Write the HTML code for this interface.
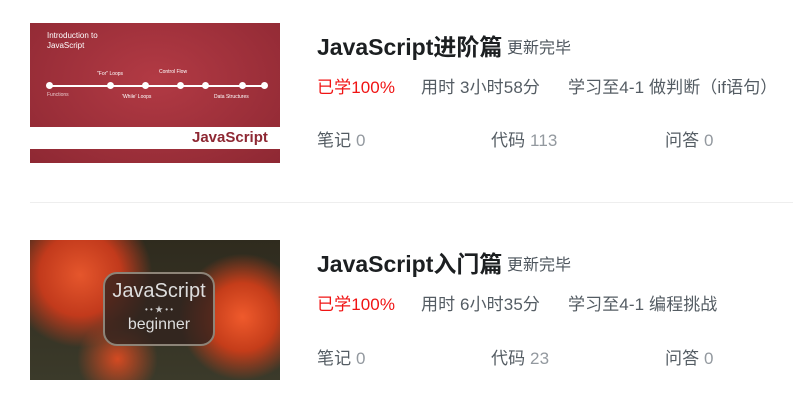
<!DOCTYPE html><html><head><meta charset="utf-8"><style>
*{margin:0;padding:0;box-sizing:border-box}
body{width:793px;height:418px;background:#fff;font-family:"Liberation Sans","Noto Sans CJK SC",sans-serif;position:relative;overflow:hidden}
.a{position:absolute;white-space:nowrap}
.t{font-size:23px;font-weight:bold;color:#1c1f21}
.s{font-size:16px;color:#4d555d}
.l{font-size:17px;color:#545c63;letter-spacing:.1px}
.r{color:#f01414}
.g{color:#93999f}
</style></head><body>
<div class="a" style="left:30px;top:23px;width:250px;height:140px;background:radial-gradient(ellipse at 50% 40%,#b23a44,#8e2833);overflow:hidden">
<div class="a" style="left:17px;top:8px;color:#fff;font-size:8px;line-height:10px">Introduction to<br>JavaScript</div>
<div class="a" style="left:18px;top:62px;width:215px;height:2px;background:#fff"></div>
<div class="a" style="left:16px;top:59px;width:7px;height:7px;border-radius:50%;background:#fff;box-shadow:61px 0 #fff,96px 0 #fff,131px 0 #fff,156px 0 #fff,193px 0 #fff,215px 0 #fff"></div>
<div class="a" style="left:17px;top:69px;color:#e8c8cb;font-size:5px">Functions</div>
<div class="a" style="left:67px;top:48px;color:#fff;font-size:5px">"For" Loops</div>
<div class="a" style="left:92px;top:71px;color:#fff;font-size:5px">'While' Loops</div>
<div class="a" style="left:129px;top:46px;color:#fff;font-size:5px">Control Flow</div>
<div class="a" style="left:184px;top:71px;color:#fff;font-size:5px">Data Structures</div>
<div class="a" style="left:0;top:104px;width:250px;height:22px;background:#fff"></div>
<div class="a" style="left:162px;top:104px;color:#8e2833;font-size:15px;font-weight:bold;line-height:22px">JavaScript</div>
</div>
<div class="a" style="left:30px;top:240px;width:250px;height:140px;background:radial-gradient(circle at 20% 25%,#e5562c 0,#c23a1c 18%,transparent 32%),radial-gradient(circle at 85% 55%,#ef5a2c 0,#c53d1a 15%,transparent 28%),radial-gradient(circle at 35% 85%,#d44a22 0,transparent 20%),linear-gradient(#2f2b1e,#3b3a2a);overflow:hidden">
<div class="a" style="left:73px;top:32px;width:112px;height:74px;border:2px solid #8d8478;border-radius:14px;background:rgba(50,35,30,.8)"></div>
<div class="a" style="left:73px;top:40px;width:112px;text-align:center;color:#ddd;font-size:20px">JavaScript</div>
<div class="a" style="left:73px;top:64px;width:112px;text-align:center;color:#ccc;font-size:8px">• • ★ • •</div>
<div class="a" style="left:73px;top:76px;width:112px;text-align:center;color:#ddd;font-size:16px">beginner</div>
</div>

<div class="a t" style="left:317px;top:28px">JavaScript进阶篇</div>
<div class="a s" style="left:507px;top:34px">更新完毕</div>
<div class="a l r" style="left:317px;top:73px">已学100%</div>
<div class="a l" style="left:421px;top:73px">用时 3小时58分</div>
<div class="a l" style="left:568px;top:73px">学习至4-1 做判断（if语句）</div>
<div class="a l" style="left:317px;top:126px">笔记 <span class="g">0</span></div>
<div class="a l" style="left:491px;top:126px">代码 <span class="g">113</span></div>
<div class="a l" style="left:665px;top:126px">问答 <span class="g">0</span></div>

<div class="a" style="left:30px;top:202px;width:763px;height:1px;background:#eee"></div>

<div class="a t" style="left:317px;top:245px">JavaScript入门篇</div>
<div class="a s" style="left:507px;top:251px">更新完毕</div>
<div class="a l r" style="left:317px;top:290px">已学100%</div>
<div class="a l" style="left:421px;top:290px">用时 6小时35分</div>
<div class="a l" style="left:568px;top:290px">学习至4-1 编程挑战</div>
<div class="a l" style="left:317px;top:344px">笔记 <span class="g">0</span></div>
<div class="a l" style="left:491px;top:344px">代码 <span class="g">23</span></div>
<div class="a l" style="left:665px;top:344px">问答 <span class="g">0</span></div>
</body></html>
